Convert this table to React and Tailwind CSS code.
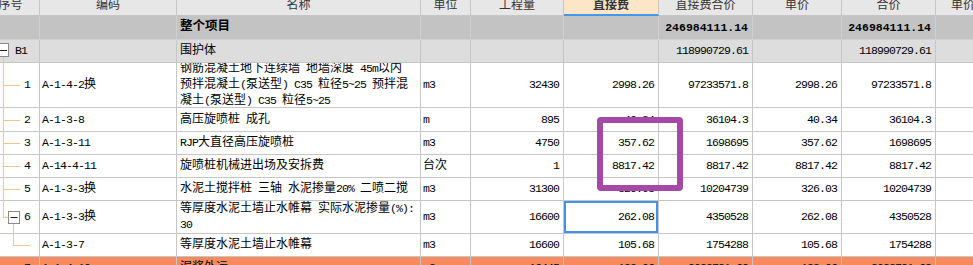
import React from 'react';

// split a label into CJK and half-width runs so the latin part gets the narrow mono width
const Mixed = ({ s }) =>
  s.split(/([\x20-\x7e]+)/).map((p, i) =>
    /^[\x20-\x7e]+$/.test(p) ? (
      <span key={i} className="text-[11.5px] tracking-[-0.9px]">{p}</span>
    ) : (
      p
    )
  );

const grid =
  'grid grid-cols-[58px_137px_244px_50px_93px_95px_94px_89px_94px_60px]';
const cell = 'flex items-center border-r border-b border-[#c6c6c6] overflow-hidden whitespace-nowrap';
const num = 'justify-end pr-[4px] text-[11.5px] tracking-[-0.9px]';

const rows = [
  {
    h: 'h-[45px]',
    no: '1',
    code: 'A-1-4-2换',
    name: ['钢筋混凝土地下连续墙 地墙深度 45m以内', '预拌混凝土(泵送型) C35 粒径5~25 预拌混', '凝土(泵送型) C35 粒径5~25'],
    unit: 'm3',
    qty: '32430',
    fee: '2998.26',
    total: '97233571.8',
    price: '2998.26',
    sum: '97233571.8',
  },
  { h: 'h-[24px]', no: '2', code: 'A-1-3-8', name: ['高压旋喷桩 成孔'], unit: 'm', qty: '895', fee: '40.34', total: '36104.3', price: '40.34', sum: '36104.3' },
  { h: 'h-[23px]', no: '3', code: 'A-1-3-11', name: ['RJP大直径高压旋喷桩'], unit: 'm3', qty: '4750', fee: '357.62', total: '1698695', price: '357.62', sum: '1698695' },
  { h: 'h-[23px]', no: '4', code: 'A-14-4-11', name: ['旋喷桩机械进出场及安拆费'], unit: '台次', qty: '1', fee: '8817.42', total: '8817.42', price: '8817.42', sum: '8817.42' },
  { h: 'h-[23px]', no: '5', code: 'A-1-3-3换', name: ['水泥土搅拌桩 三轴 水泥掺量20% 二喷二搅'], unit: 'm3', qty: '31300', fee: '326.03', total: '10204739', price: '326.03', sum: '10204739' },
  {
    h: 'h-[33px]',
    no: '6',
    code: 'A-1-3-3换',
    name: ['等厚度水泥土墙止水帷幕 实际水泥掺量(%):', '30'],
    unit: 'm3',
    qty: '16600',
    fee: '262.08',
    total: '4350528',
    price: '262.08',
    sum: '4350528',
    selected: true,
  },
  { h: 'h-[23px]', no: '', code: 'A-1-3-7', name: ['等厚度水泥土墙止水帷幕'], unit: 'm3', qty: '16600', fee: '105.68', total: '1754288', price: '105.68', sum: '1754288' },
  { h: 'h-[23px]', no: '7', code: 'A-1-4-10', name: ['泥浆外运'], unit: 'm3', qty: '16445', fee: '123.06', total: '2023721.68', price: '123.06', sum: '2023721.68', bg: 'bg-[#f78a5f]' },
];

const headers = ['序号', '编码', '名称', '单位', '工程量', '直接费', '直接费合价', '单价', '合价'];

export default function App() {
  return (
    <div className="relative w-[973px] h-[265px] overflow-hidden bg-white text-black font-['Liberation_Mono','Noto_Sans_CJK_SC',monospace] text-[12px]">
      <div className="-ml-[18px] w-[1014px]">
        {/* header */}
        <div className={`${grid} h-[16px] bg-[#e7e7e7] text-[#333] leading-[13px]`}>
          {headers.map((t) =>
            t === '直接费' ? (
              <div key={t} className="flex justify-center items-start border-r border-[#c6c6c6] border-b-2 border-b-[#4597ee] bg-[#fde6c8] font-bold">
                {t}
              </div>
            ) : (
              <div key={t} className="flex justify-center items-start border-r border-b border-[#c6c6c6]">
                {t}
              </div>
            )
          )}
          <div className="flex items-start pl-[15px] border-b border-[#c6c6c6]">单价</div>
        </div>

        {/* whole project */}
        <div className={`${grid} h-[24px] bg-[#c3c3c3]`}>
          <div className={`${cell} border-[#d0d0d0]`} />
          <div className={`${cell} border-[#d0d0d0]`} />
          <div className={`${cell} border-[#d0d0d0] pl-[3px] font-bold text-[12.5px]`}>整个项目</div>
          <div className={`${cell} border-[#d0d0d0]`} />
          <div className={`${cell} border-[#d0d0d0]`} />
          <div className={`${cell} border-[#d0d0d0]`} />
          <div className={`${cell} border-[#d0d0d0] justify-end pr-[4px] text-[11.5px] tracking-[0px] font-bold`}>246984111.14</div>
          <div className={`${cell} border-[#d0d0d0]`} />
          <div className={`${cell} border-[#d0d0d0] justify-end pr-[4px] text-[11.5px] tracking-[0px] font-bold`}>246984111.14</div>
          <div className={`${cell} border-r-0 border-[#d0d0d0]`} />
        </div>

        {/* B1 */}
        <div className={`${grid} h-[23px] bg-[#dddddd]`}>
          <div className={`${cell} pl-[33px] text-[11.5px] tracking-[-0.9px]`}>B1</div>
          <div className={cell} />
          <div className={`${cell} pl-[3px]`}>围护体</div>
          <div className={cell} />
          <div className={cell} />
          <div className={cell} />
          <div className={`${cell} ${num}`}>118990729.61</div>
          <div className={cell} />
          <div className={`${cell} ${num}`}>118990729.61</div>
          <div className={`${cell} border-r-0`} />
        </div>

        {rows.map((r, i) => (
          <div key={i} className={`${grid} ${r.h} ${r.bg || 'bg-white'}`}>
            <div className={`${cell} ${num} pr-[9px]`}>{r.no}</div>
            <div className={`${cell} pl-[2px]`}>
              <Mixed s={r.code} />
            </div>
            <div className={`${cell} pl-[3px]`}>
              <div className="leading-[15px]">
                {r.name.map((l, j) => (
                  <div key={j}>
                    <Mixed s={l} />
                  </div>
                ))}
              </div>
            </div>
            <div className={`${cell} pl-[2px]`}>
              <Mixed s={r.unit} />
            </div>
            <div className={`${cell} ${num}`}>{r.qty}</div>
            <div className={`${cell} ${num} ${r.selected ? 'ring-2 ring-inset ring-[#4194ec]' : ''}`}>{r.fee}</div>
            <div className={`${cell} ${num}`}>{r.total}</div>
            <div className={`${cell} ${num}`}>{r.price}</div>
            <div className={`${cell} ${num}`}>{r.sum}</div>
            <div className={`${cell} border-r-0`} />
          </div>
        ))}
      </div>

      {/* tree lines and expand boxes */}
      <svg className="absolute left-0 top-0 pointer-events-none" width="40" height="265" viewBox="0 0 40 265">
        <g stroke="#f7c48a" strokeWidth="1" fill="none">
          <line x1="3.5" y1="57" x2="3.5" y2="218" />
          <line x1="3" y1="85.5" x2="20" y2="85.5" />
          <line x1="3" y1="120.5" x2="20" y2="120.5" />
          <line x1="3" y1="143.5" x2="20" y2="143.5" />
          <line x1="3" y1="166.5" x2="20" y2="166.5" />
          <line x1="3" y1="189.5" x2="20" y2="189.5" />
          <line x1="3" y1="217.5" x2="8" y2="217.5" />
          <line x1="13.5" y1="224" x2="13.5" y2="245.5" />
          <line x1="13" y1="245.5" x2="30" y2="245.5" />
        </g>
        <rect x="-3.5" y="43.5" width="12" height="13" fill="#fff" stroke="#8a8a8a" />
        <line x1="-1" y1="50.5" x2="7" y2="50.5" stroke="#222" />
        <rect x="8.5" y="211.5" width="11" height="12" fill="#fff" stroke="#8a8a8a" />
        <line x1="10.5" y1="217.5" x2="17.5" y2="217.5" stroke="#222" />
      </svg>

      {/* purple highlight box */}
      <div className="absolute left-[597px] top-[117px] w-[86px] h-[74px] border-[6px] border-[#a449a5] rounded-[4px] pointer-events-none" />
    </div>
  );
}
